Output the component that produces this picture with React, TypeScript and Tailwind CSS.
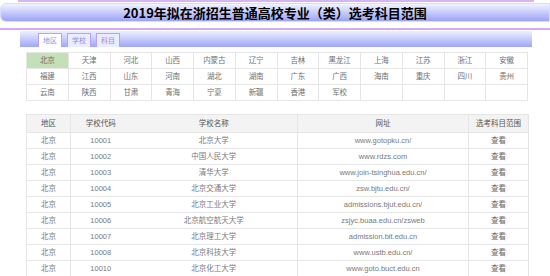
import React from "react";

const regions = [
  "北京", "天津", "河北", "山西", "内蒙古", "辽宁", "吉林", "黑龙江", "上海", "江苏", "浙江", "安徽",
  "福建", "江西", "山东", "河南", "湖北", "湖南", "广东", "广西", "海南", "重庆", "四川", "贵州",
  "云南", "陕西", "甘肃", "青海", "宁夏", "新疆", "香港", "军校", "", "", "", "",
];

const rows: [string, string, string, string][] = [
  ["北京", "10001", "北京大学", "www.gotopku.cn/"],
  ["北京", "10002", "中国人民大学", "www.rdzs.com"],
  ["北京", "10003", "清华大学", "www.join-tsinghua.edu.cn/"],
  ["北京", "10004", "北京交通大学", "zsw.bjtu.edu.cn/"],
  ["北京", "10005", "北京工业大学", "admissions.bjut.edu.cn/"],
  ["北京", "10006", "北京航空航天大学", "zsjyc.buaa.edu.cn/zsweb"],
  ["北京", "10007", "北京理工大学", "admission.bit.edu.cn"],
  ["北京", "10008", "北京科技大学", "www.ustb.edu.cn/"],
  ["北京", "10010", "北京化工大学", "www.goto.buct.edu.cn"],
];

export default function App() {
  return (
    <div
      className="w-[550px] h-[276px] overflow-hidden bg-white"
      style={{ fontFamily: '"Liberation Sans", "Noto Sans CJK SC", sans-serif' }}
    >
      <div className="ml-[18px] w-[516px] h-[2px] bg-[#d6b4f6]" />
      <div
        className="mt-[1px] h-[19px] rounded-l-[6px] border border-[#d9dcff] bg-gradient-to-b from-[#f2f3ff] to-[#9da3f6] flex items-center justify-center text-[13px] font-bold text-black leading-none [text-spacing-trim:space-all]"
        style={{ fontFamily: '"Noto Sans CJK SC", sans-serif' }}
      >
        2019年拟在浙招生普通高校专业（类）选考科目范围
      </div>
      <div className="mt-[6px] h-[2px] bg-[#d3aaf5]" />
      <div className="mt-[1px] ml-[20px] w-[512px] h-[16px] bg-gradient-to-b from-[#eef0ff] to-[#9fa6f7] flex items-end pl-[18px] gap-[5px]">
        {["地区", "学校", "科目"].map((t, i) => (
          <div
            key={t}
            className={
              "w-[24px] h-[14px] border border-b-0 border-[#b9a2f2] flex items-center justify-center text-[7px] text-[#968ddf] leading-none " +
              (i === 0 ? "bg-white" : "bg-[#eaecff]")
            }
          >
            {t}
          </div>
        ))}
      </div>
      <div className="mt-[5px] ml-[26px] w-[502px] grid grid-cols-[repeat(12,1fr)] border-t border-l border-[#e6e6e6]">
        {regions.map((r, i) => (
          <div
            key={i}
            className={
              "h-[16px] border-r border-b border-[#e6e6e6] flex items-center justify-center text-[7.5px] text-[#707070] leading-none " +
              (i === 0 ? "bg-[#c3e0b9]" : "bg-white")
            }
          >
            {r}
          </div>
        ))}
      </div>
      <table className="mt-[13px] ml-[26px] w-[502px] table-fixed border-collapse text-[7.5px] leading-none">
        <colgroup>
          <col className="w-[44px]" />
          <col className="w-[60px]" />
          <col className="w-[167px]" />
          <col className="w-[171px]" />
          <col className="w-[60px]" />
        </colgroup>
        <thead>
          <tr className="h-[18px] bg-[#f3f3f3] text-[#555]">
            <th className="font-normal border border-[#e6e6e6]">地区</th>
            <th className="font-normal border-y border-[#e6e6e6]">学校代码</th>
            <th className="font-normal border-y border-[#e6e6e6]">学校名称</th>
            <th className="font-normal border border-[#e6e6e6]">网址</th>
            <th className="font-normal border border-[#e6e6e6]">选考科目范围</th>
          </tr>
        </thead>
        <tbody>
          {rows.map((r) => (
            <tr key={r[1]} className="h-[16px] text-[#7a7a7a]">
              <td className="text-center border border-[#e6e6e6]">{r[0]}</td>
              <td className="text-center border-y border-[#e6e6e6]">{r[1]}</td>
              <td className="text-center border-y border-[#e6e6e6]">{r[2]}</td>
              <td className="text-center border border-[#e6e6e6]">{r[3]}</td>
              <td className="text-center border border-[#e6e6e6] text-[#666]">查看</td>
            </tr>
          ))}
        </tbody>
      </table>
    </div>
  );
}
